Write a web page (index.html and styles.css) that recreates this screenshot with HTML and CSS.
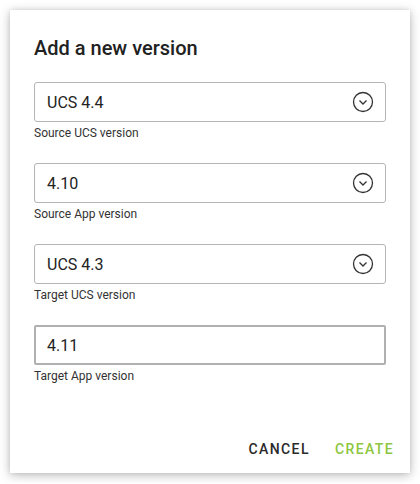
FILE: index.html
```html
<!DOCTYPE html>
<html>
<head>
<meta charset="utf-8">
<link rel="stylesheet" href="styles.css">
</head>
<body>
<div class="dialog">
  <h1 class="title">Add a new version</h1>
  <div class="fields">
    <div class="field">
      <div class="select">
        <span class="value">UCS 4.4</span>
        <svg class="chev" width="22" height="22" viewBox="0 0 22 22"><circle cx="11" cy="11" r="9.5" fill="none" stroke="#333" stroke-width="1.3"/><path d="M7.5 9.5 L11 13 L14.5 9.5" fill="none" stroke="#333" stroke-width="1.3"/></svg>
      </div>
      <div class="label">Source UCS version</div>
    </div>
    <div class="field">
      <div class="select">
        <span class="value">4.10</span>
        <svg class="chev" width="22" height="22" viewBox="0 0 22 22"><circle cx="11" cy="11" r="9.5" fill="none" stroke="#333" stroke-width="1.3"/><path d="M7.5 9.5 L11 13 L14.5 9.5" fill="none" stroke="#333" stroke-width="1.3"/></svg>
      </div>
      <div class="label">Source App version</div>
    </div>
    <div class="field">
      <div class="select">
        <span class="value">UCS 4.3</span>
        <svg class="chev" width="22" height="22" viewBox="0 0 22 22"><circle cx="11" cy="11" r="9.5" fill="none" stroke="#333" stroke-width="1.3"/><path d="M7.5 9.5 L11 13 L14.5 9.5" fill="none" stroke="#333" stroke-width="1.3"/></svg>
      </div>
      <div class="label">Target UCS version</div>
    </div>
    <div class="field">
      <div class="input">
        <span class="value">4.11</span>
      </div>
      <div class="label">Target App version</div>
    </div>
  </div>
  <div class="actions">
    <button class="btn cancel">CANCEL</button>
    <button class="btn create">CREATE</button>
  </div>
</div>
</body>
</html>
```
FILE: styles.css
```css
html, body {
  margin: 0;
  padding: 0;
}
body {
  background: #ffffff;
  font-family: Roboto, "Liberation Sans", sans-serif;
  padding: 10px;
  width: 400px;
}
.dialog {
  background: #fff;
  height: 463px;
  box-sizing: border-box;
  padding: 24px 24px 0 24px;
  box-shadow: 0 2px 10px rgba(0,0,0,0.28), 0 0 4px rgba(0,0,0,0.08);
  display: flex;
  flex-direction: column;
}
.title {
  margin: 0;
  font-size: 20px;
  font-weight: 500;
  line-height: 28px;
  color: #212121;
}
.fields {
  margin-top: 20px;
  display: flex;
  flex-direction: column;
  gap: 22px;
}
.select, .input {
  height: 40px;
  box-sizing: border-box;
  border: 1px solid #b5b5b5;
  border-radius: 3px;
  display: flex;
  align-items: center;
  justify-content: space-between;
  padding: 0 11px 0 12px;
}
.input {
  border: 2px solid #b0b0b0;
  border-radius: 2px;
  padding-left: 11px;
}
.value {
  font-size: 16px;
  color: #222;
}
.chev {
  display: block;
}
.label {
  margin-top: 3px;
  font-size: 12px;
  line-height: 16px;
  color: #333;
}
.actions {
  margin-top: auto;
  margin-right: -8px;
  height: 32px;
  display: flex;
  justify-content: flex-end;
  align-items: flex-start;
  gap: 25px;
}
.btn {
  border: none;
  background: none;
  padding: 0;
  font-family: Roboto, "Liberation Sans", sans-serif;
  font-size: 14px;
  font-weight: 500;
  letter-spacing: 1.4px;
  line-height: 16px;
}
.cancel { color: #2a2a2a; }
.create { color: #8dc63f; }
```
